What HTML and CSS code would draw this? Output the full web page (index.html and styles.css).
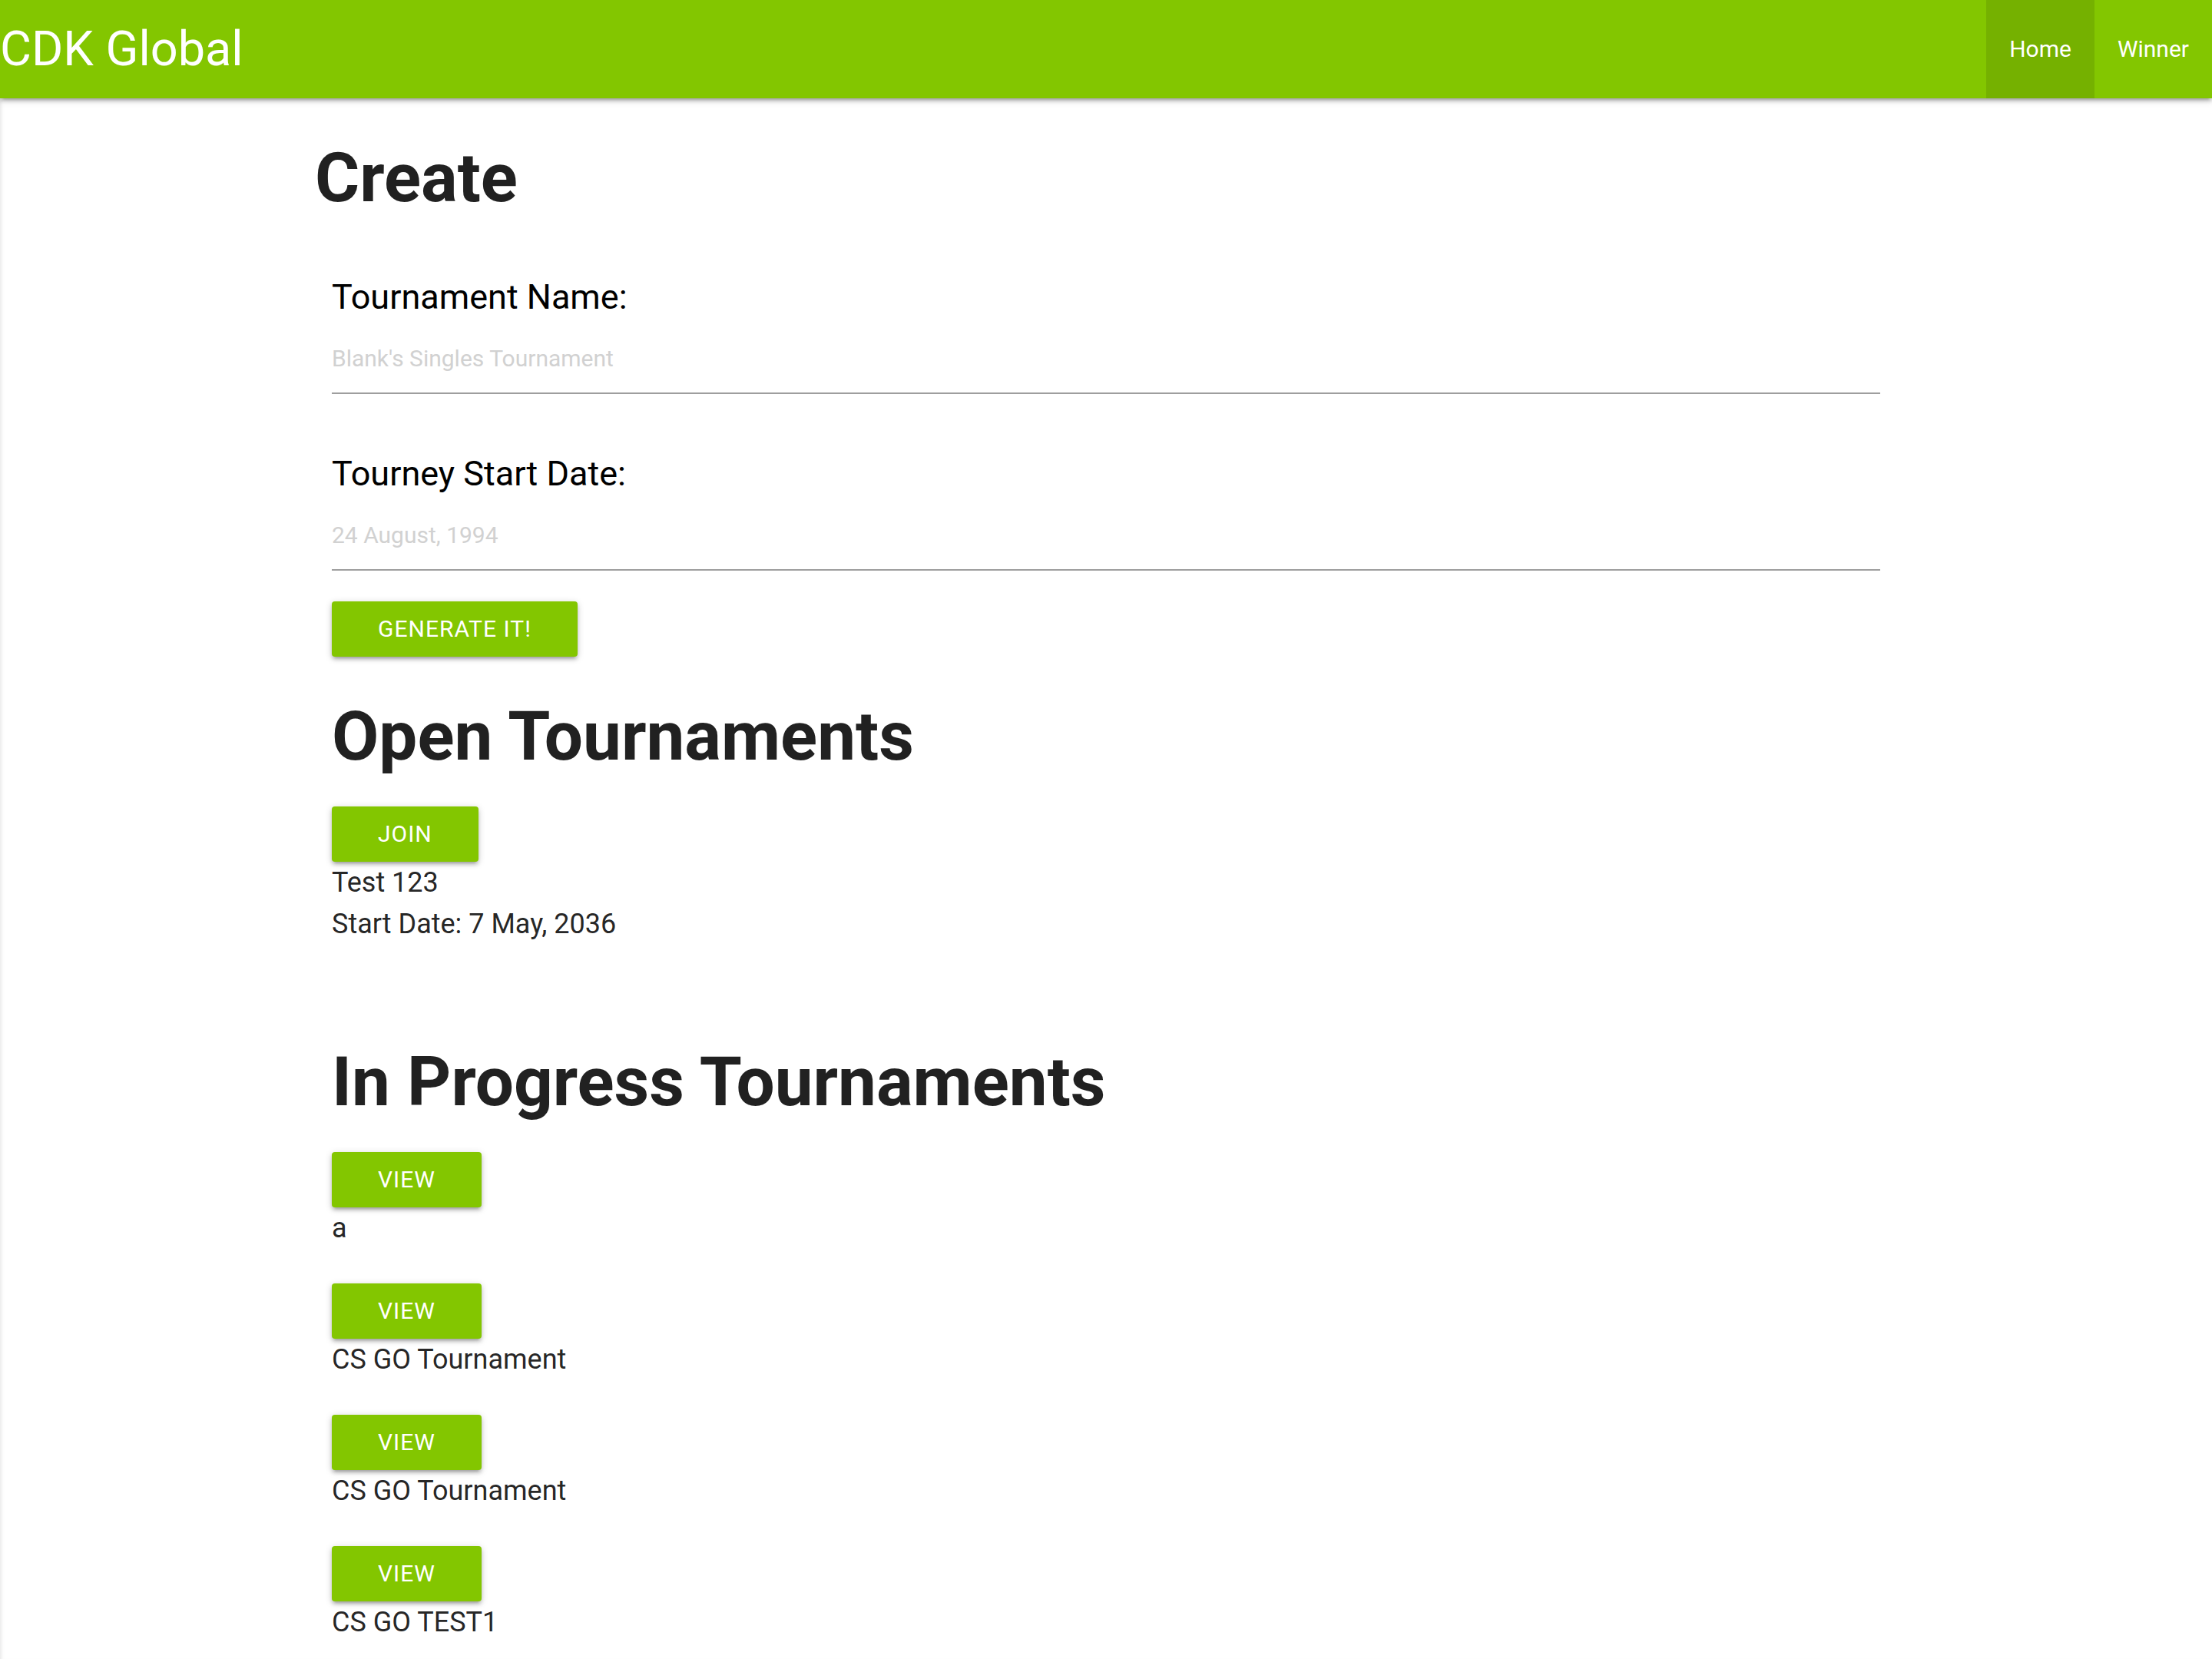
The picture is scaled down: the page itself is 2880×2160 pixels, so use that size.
FILE: index.html
```html
<!DOCTYPE html>
<html lang="en">
<head>
<meta charset="utf-8">
<title>CDK Global</title>
<link rel="stylesheet" href="styles.css">
</head>
<body>
<nav class="navbar">
  <a class="brand" href="#">CDK Global</a>
  <ul class="nav-links">
    <li class="nav-item active"><a href="#">Home</a></li>
    <li class="nav-item"><a href="#">Winner</a></li>
  </ul>
</nav>
<div class="page">
  <main class="container">
    <h1 class="page-title">Create</h1>
    <form class="create-form">
      <div class="field">
        <label class="field-label" for="tname">Tournament Name:</label>
        <input class="field-input" id="tname" type="text" placeholder="Blank's Singles Tournament">
      </div>
      <div class="field field-last">
        <label class="field-label" for="tdate">Tourney Start Date:</label>
        <input class="field-input" id="tdate" type="text" placeholder="24 August, 1994">
      </div>
      <button class="btn" type="button">Generate it!</button>
    </form>

    <section class="section open-section">
      <h2 class="section-title">Open Tournaments</h2>
      <div class="item">
        <a class="btn" href="#">Join</a>
        <div class="item-text">Test 123</div>
        <div class="item-text">Start Date: 7 May, 2036</div>
      </div>
    </section>

    <section class="section progress-section">
      <h2 class="section-title">In Progress Tournaments</h2>
      <div class="item-list">
        <div class="item">
          <a class="btn" href="#">View</a>
          <div class="item-text">a</div>
        </div>
        <div class="item">
          <a class="btn" href="#">View</a>
          <div class="item-text">CS GO Tournament</div>
        </div>
        <div class="item">
          <a class="btn" href="#">View</a>
          <div class="item-text">CS GO Tournament</div>
        </div>
        <div class="item">
          <a class="btn" href="#">View</a>
          <div class="item-text">CS GO TEST1</div>
        </div>
      </div>
    </section>
  </main>
</div>
</body>
</html>
```

FILE: styles.css
```css
html, body {
  margin: 0;
  padding: 0;
}
body {
  font-family: Roboto, "Noto Sans", "Liberation Sans", sans-serif;
  color: rgba(0, 0, 0, 0.87);
  background: #ffffff;
  font-size: 36px;
  line-height: 54px;
}

/* ---------- navbar ---------- */
.navbar {
  position: relative;
  z-index: 2;
  display: flex;
  justify-content: space-between;
  align-items: stretch;
  height: 128px;
  background-color: #83c600;
  box-shadow: 0 4px 4px 0 rgba(0, 0, 0, 0.14), 0 6px 2px -4px rgba(0, 0, 0, 0.12), 0 2px 10px 0 rgba(0, 0, 0, 0.2);
}
.brand {
  color: #ffffff;
  text-decoration: none;
  font-size: 63px;
  line-height: 128px;
  font-weight: 400;
  white-space: nowrap;
}
.nav-links {
  display: flex;
  margin: 0;
  padding: 0;
  list-style: none;
}
.nav-item a {
  display: block;
  padding: 0 30px;
  color: #ffffff;
  text-decoration: none;
  font-size: 30px;
  line-height: 128px;
}
.nav-item.active {
  background-color: rgba(0, 0, 0, 0.1);
}

/* ---------- page ---------- */
.page {
  min-height: 2032px;
  box-shadow: inset 5px 0 5px -4px rgba(0, 0, 0, 0.12);
}
.container {
  width: 2016px;
  margin: 0 auto;
  padding-top: 54px;
}
.page-title {
  margin: 0 0 0 -22px;
  font-size: 89px;
  line-height: 100px;
  font-weight: 700;
  color: rgba(0, 0, 0, 0.87);
}

/* ---------- form ---------- */
.create-form {
  display: flex;
  flex-direction: column;
  align-items: flex-start;
  margin: 0;
  padding-top: 75px;
}
.field {
  display: flex;
  flex-direction: column;
  width: 100%;
  margin-bottom: 74px;
}
.field-last {
  margin-bottom: 40px;
}
.field-label {
  font-size: 45px;
  line-height: 60px;
  color: #000000;
  padding-bottom: 4px;
}
.field-input {
  box-sizing: content-box;
  width: 100%;
  height: 90px;
  margin: 0;
  padding: 0;
  border: none;
  border-bottom: 2px solid #9e9e9e;
  background: transparent;
  outline: none;
  font-family: Roboto, "Noto Sans", "Liberation Sans", sans-serif;
  font-size: 30px;
  color: rgba(0, 0, 0, 0.87);
}
.field-input::placeholder {
  color: #d1d1d1;
}

/* ---------- buttons ---------- */
.btn {
  display: inline-block;
  box-sizing: border-box;
  height: 72px;
  margin: 0;
  padding: 0 60px;
  border: none;
  border-radius: 4px;
  background-color: #83c600;
  color: #ffffff;
  font-family: Roboto, "Noto Sans", "Liberation Sans", sans-serif;
  font-size: 30px;
  line-height: 72px;
  letter-spacing: 1px;
  text-transform: uppercase;
  text-decoration: none;
  white-space: nowrap;
  cursor: pointer;
  box-shadow: 0 4px 4px 0 rgba(0, 0, 0, 0.14), 0 6px 2px -4px rgba(0, 0, 0, 0.12), 0 2px 10px 0 rgba(0, 0, 0, 0.2);
}

/* ---------- sections ---------- */
.section-title {
  margin: 0 0 41px 0;
  font-size: 89px;
  line-height: 100px;
  font-weight: 700;
  color: rgba(0, 0, 0, 0.87);
}
.open-section {
  padding-top: 54px;
}
.progress-section {
  padding-top: 129px;
}
.item-list {
  display: flex;
  flex-direction: column;
  gap: 45px;
}
.item {
  display: flex;
  flex-direction: column;
  align-items: flex-start;
}
.item-text {
  font-size: 36px;
  line-height: 54px;
  color: rgba(0, 0, 0, 0.87);
}
```
